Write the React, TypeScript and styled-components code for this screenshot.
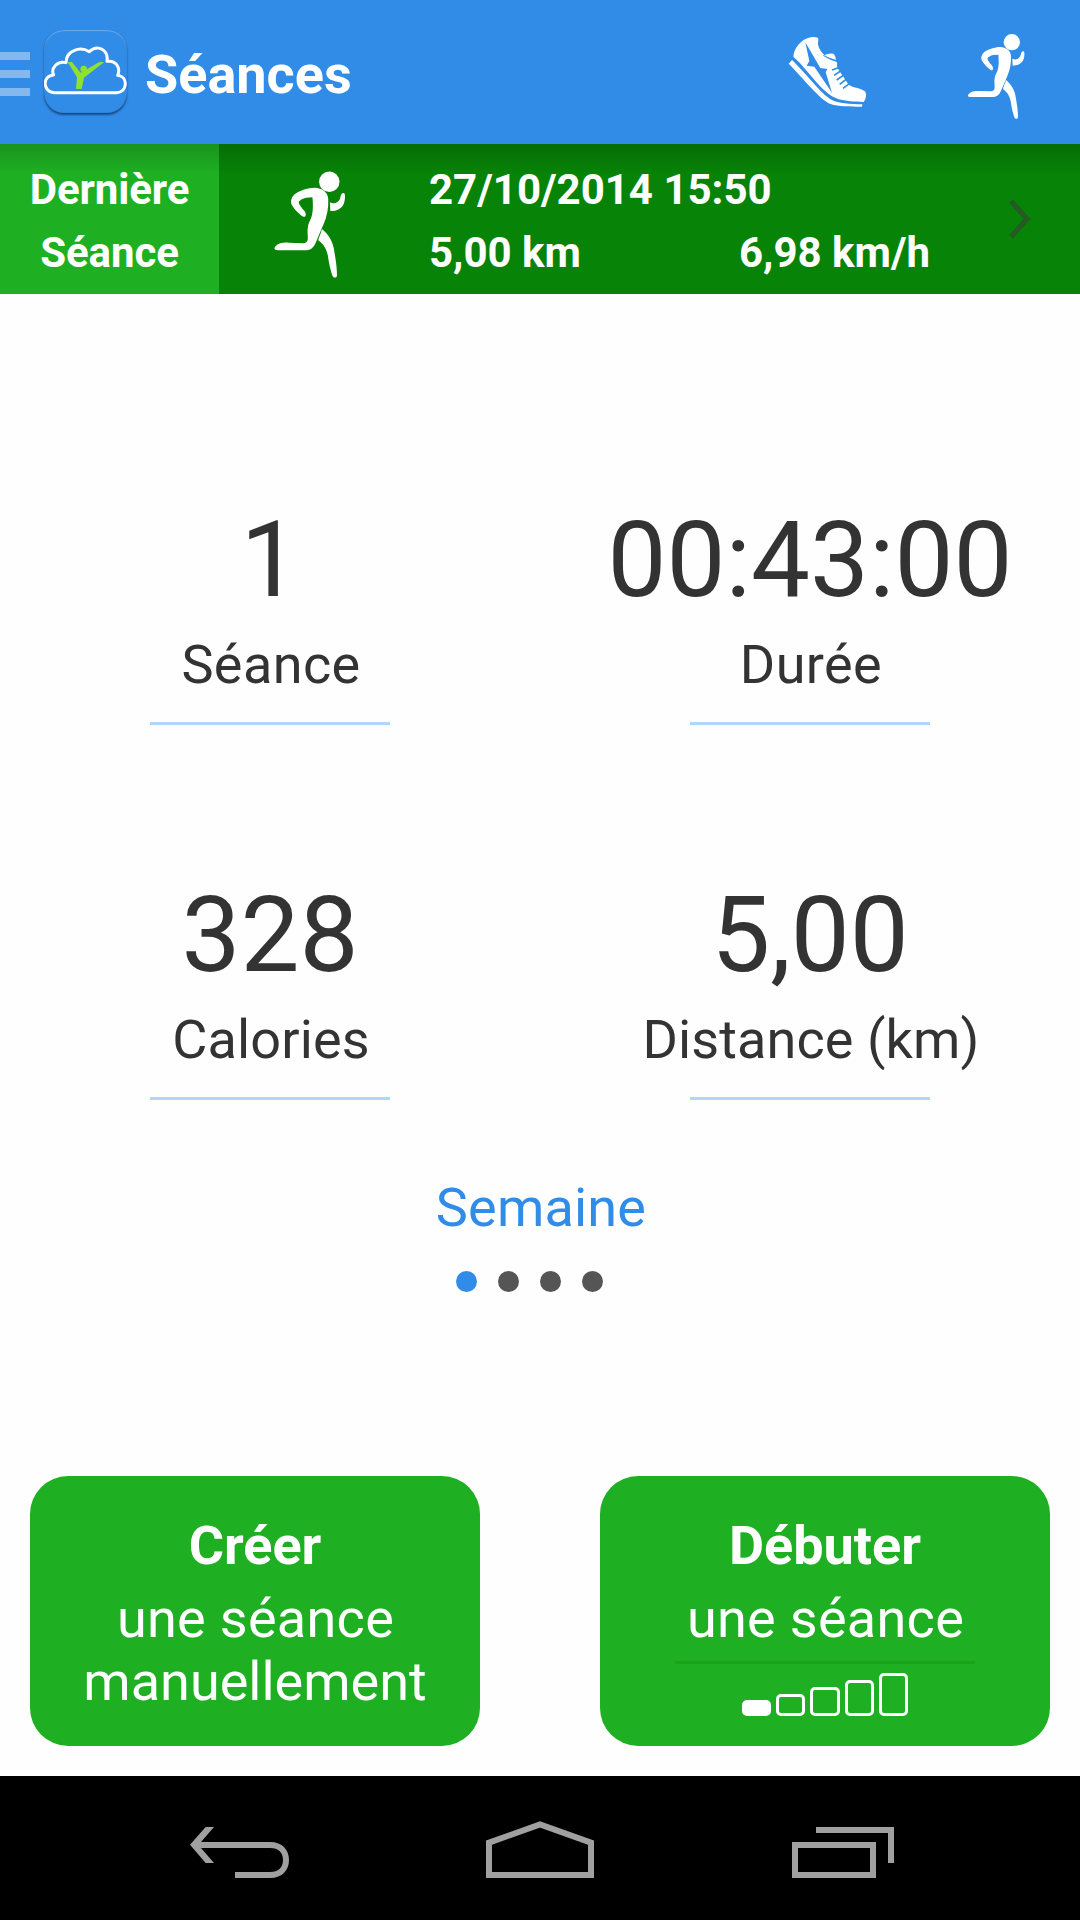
import React from "react";
import styled, { createGlobalStyle } from "styled-components";

const GlobalStyle = createGlobalStyle`
  * { box-sizing: border-box; }
  html, body { margin: 0; padding: 0; background: #fff; }
  body { font-family: Roboto, "Liberation Sans", sans-serif; color: #333; }
`;

const Screen = styled.div`
  width: 1080px;
  height: 1920px;
  display: flex;
  flex-direction: column;
  background: #fefefe;
  overflow: hidden;
  svg { display: block; }
`;

const ActionBar = styled.header`
  height: 144px;
  flex: none;
  display: flex;
  align-items: center;
  padding-right: 30px;
  background: #318ce7;
`;

const MenuHandle = styled.div`
  width: 30px;
  margin: 4px 13.5px 0 0;
  display: flex;
  flex-direction: column;
  gap: 10px;
`;

const MenuLine = styled.span`
  height: 8px;
  background: #84b9f0;
`;

const LogoTile = styled.div`
  width: 83px;
  height: 84px;
  border-radius: 20px;
  box-shadow: inset 0 1px 1px rgba(255, 255, 255, 0.3), inset 0 -1px 1px rgba(0, 20, 50, 0.6),
    0 1px 2px rgba(0, 20, 50, 0.5);
`;

const Title = styled.h1`
  flex: 1;
  margin: 0 0 0 18.5px;
  padding-top: 5px;
  font-size: 54px;
  line-height: 63px;
  font-weight: 700;
  color: #fff;
`;

const Actions = styled.div`
  display: flex;
  gap: 60px;
  padding-top: 6px;
`;

const LastSession = styled.section`
  height: 150px;
  flex: none;
  display: flex;
  background: linear-gradient(rgba(0, 0, 0, 0.17), rgba(0, 0, 0, 0) 30px), #078307;
  color: #fff;
  font-size: 42px;
  line-height: 63px;
  font-weight: 700;
`;

const LastLabel = styled.div`
  width: 219px;
  padding-top: 14px;
  text-align: center;
  letter-spacing: -0.1px;
  background: linear-gradient(rgba(0, 0, 0, 0.17), rgba(0, 0, 0, 0) 30px), #1eb022;
`;

const LastIcon = styled.div`
  width: 210px;
  padding: 10px 0 0 33px;
`;

const LastData = styled.div`
  width: 570px;
  padding-top: 14px;
`;

const DataRow = styled.div`
  display: grid;
  grid-template-columns: 310px 1fr;
`;

const Chevron = styled.div`
  padding: 54px 0 0 8px;
`;

const Stats = styled.main`
  flex: none;
  padding-top: 205px;
  display: grid;
  grid-template-columns: 540px 540px;
  row-gap: 149px;
`;

const Stat = styled.div`
  display: flex;
  flex-direction: column;
  align-items: center;
`;

const StatValue = styled.div`
  font-size: 105px;
  line-height: 124px;
`;

const StatLabel = styled.div<{ $tracking: number }>`
  margin-top: 10px;
  padding-left: 2px;
  font-size: 54px;
  line-height: 63px;
  letter-spacing: ${(p) => p.$tracking}px;
`;

const Rule = styled.div<{ $width: number; $color: string; $top: number }>`
  width: ${(p) => p.$width}px;
  height: 3px;
  margin-top: ${(p) => p.$top}px;
  background: ${(p) => p.$color};
`;

const Period = styled.div`
  margin-top: 76px;
  padding-left: 2px;
  text-align: center;
  font-size: 54px;
  line-height: 63px;
  letter-spacing: 0.2px;
  color: #318ce7;
`;

const Dots = styled.div`
  margin-top: 32px;
  display: flex;
  justify-content: center;
`;

const Dot = styled.span<{ $active?: boolean }>`
  width: 21px;
  height: 21px;
  margin-right: 21px;
  border-radius: 50%;
  background: ${(p) => (p.$active ? "#318ce7" : "#555")};
`;

const Buttons = styled.div`
  margin-top: auto;
  padding: 0 30px 30px;
  display: flex;
  justify-content: space-between;
`;

const BigButton = styled.button`
  width: 450px;
  height: 270px;
  padding: 38px 0 0;
  border: 0;
  border-radius: 38px;
  background: #1eb022;
  color: #fff;
  font: 400 54px/63px Roboto, "Liberation Sans", sans-serif;
  display: flex;
  flex-direction: column;
  align-items: center;
`;

const Strong = styled.strong`
  font-weight: 700;
  margin-bottom: 10px;
`;

const Phrase = styled.span`
  padding-left: 1px;
  letter-spacing: 0.3px;
`;

const Levels = styled.div`
  height: 43px;
  margin-top: 9px;
  display: flex;
  align-items: flex-end;
  gap: 5px;
`;

const Level = styled.span<{ $height: number; $filled?: boolean }>`
  width: 29.2px;
  height: ${(p) => p.$height}px;
  border: 3px solid #fff;
  border-radius: 5px;
  background: ${(p) => (p.$filled ? "#fff" : "transparent")};
`;

const NavBar = styled.nav`
  height: 144px;
  flex: none;
  display: grid;
  grid-template-columns: 300px 290px 160px;
  padding: 24px 0 0 170px;
  background: #000;
`;

const Runner = ({ width, height }: { width: number; height: number }) => (
  <svg width={width} height={height} viewBox="0 0 300 330" fill="#fff">
    <circle cx="185.500" cy="66.500" r="24.500" />
    <path d="M150 81C168 82 182 91 183 108C184 130 180 150 172 168C166 182 160 196 155 208C149 222 144 230 130 231L62 231C53 231 52 226 57 221C65 213 75 212 88 213L122 214C130 214 134 210 134 202C134 188 131 175 139 160C147 146 147 125 145 104L130 105C122 107 114 111 112 115C113 122 122 132 127 138C131 147 129 153 122 150C112 143 100 131 95 121C92 112 95 103 103 96C115 88 135 81 150 81Z" />
    <path d="M187 116C197 121 207 117 211 108C213 103 212 99 216 95C222 91 224 96 223 106C222 124 212 137 188 137Z" />
    <path d="M168 180C180 190 192 205 196 225C200 248 204 270 204 292C203 298 196 298 193 292C189 280 185 265 183 250C181 232 174 218 159 207C160 200 165 192 168 180Z" />
  </svg>
);

const Shoe = () => (
  <svg width="120" height="110" viewBox="0 0 360 330">
    <path
      fill="#fff"
      d="M70 110C72 88 88 64 112 55C124 50 136 50 143 53C148 57 142 66 145 77C150 96 166 108 182 119C190 122 196 124 200 126C203 130 200 137 202 143L236 194C250 203 275 205 285 214C291 223 288 237 281 246C255 246 225 243 206 238C182 230 162 212 142 190C120 165 97 134 70 110Z"
    />
    <path fill="#fff" d="M164 106C170 101 180 99 190 101C195 104 197 112 198 121C188 117 176 114 164 106Z" />
    <path fill="none" stroke="#318ce7" strokeWidth="3" d="M160 106C174 117 187 118 200 122" />
    <path
      fill="none"
      stroke="#318ce7"
      strokeWidth="5"
      d="M186 150L205 143M192 166L212 153M200 180L220 166M209 193L228 178M219 205L238 191"
    />
    <path fill="#318ce7" d="M106 67L151 144L172 147L167 157L186 218L133 140L110 137L118 123Z" />
    <path
      fill="#fff"
      d="M66 120C82 136 105 160 128 187C150 212 168 231 186 240C205 250 240 252 277 253L276 260C240 260 205 260 182 252C150 240 105 180 56 131Z"
    />
  </svg>
);

const CloudLogo = () => (
  <svg width="83" height="84" viewBox="132 90 249 252">
    <path
      fill="none"
      stroke="#fff"
      strokeWidth="9"
      strokeLinejoin="round"
      d="M164 278C126 276 127 226 161 225C151 205 172 181 198 188C198 154 238 137 268 155C294 131 326 150 321 184C347 180 363 203 353 226C385 230 383 276 350 278Z"
    />
    <circle cx="251" cy="207" r="10" fill="#8fe02f" />
    <path fill="#8fe02f" d="M203 186L216 186L242 218L298 186L313 186L252 233L245 267L228 267L231 232Z" />
  </svg>
);

const stats = [
  { value: "1", label: "Séance", tracking: 0.4 },
  { value: "00:43:00", label: "Durée", tracking: 0.4 },
  { value: "328", label: "Calories", tracking: 0.15 },
  { value: "5,00", label: "Distance (km)", tracking: 0.1 },
];

const levels = [16, 22, 29, 36, 43];

export default function App() {
  return (
    <Screen>
      <GlobalStyle />
      <ActionBar>
        <MenuHandle>
          <MenuLine />
          <MenuLine />
          <MenuLine />
        </MenuHandle>
        <LogoTile>
          <CloudLogo />
        </LogoTile>
        <Title>Séances</Title>
        <Actions>
          <Shoe />
          <Runner width={100} height={110} />
        </Actions>
      </ActionBar>
      <LastSession>
        <LastLabel>
          Dernière
          <br />
          Séance
        </LastLabel>
        <LastIcon>
          <Runner width={125} height={137.5} />
        </LastIcon>
        <LastData>
          <div>27/10/2014 15:50</div>
          <DataRow>
            <span>5,00 km</span>
            <span>6,98 km/h</span>
          </DataRow>
        </LastData>
        <Chevron>
          <svg width="28" height="42" viewBox="0 0 28 42" fill="none" stroke="#245a24" strokeWidth="5">
            <path d="M4 3L20 21L4 39" />
          </svg>
        </Chevron>
      </LastSession>
      <Stats>
        {stats.map((s) => (
          <Stat key={s.label}>
            <StatValue>{s.value}</StatValue>
            <StatLabel $tracking={s.tracking}>{s.label}</StatLabel>
            <Rule $width={240} $color="#b3d5f6" $top={26} />
          </Stat>
        ))}
      </Stats>
      <Period>Semaine</Period>
      <Dots>
        <Dot $active />
        <Dot />
        <Dot />
        <Dot />
      </Dots>
      <Buttons>
        <BigButton>
          <Strong>Créer</Strong>
          <Phrase>une séance</Phrase>
          <span>manuellement</span>
        </BigButton>
        <BigButton>
          <Strong>Débuter</Strong>
          <Phrase>une séance</Phrase>
          <Rule $width={300} $color="#1ba31b" $top={11} />
          <Levels>
            {levels.map((h, i) => (
              <Level key={h} $height={h} $filled={i === 0} />
            ))}
          </Levels>
        </BigButton>
      </Buttons>
      <NavBar>
        <svg width="140" height="100" viewBox="0 0 420 300">
          <path
            fill="#a0a0a0"
            d="M60 134L107 81H132L93 126H300C338 126 357 150 357 180C357 210 338 234 300 234H195V216H300C326 216 339 202 339 180C339 158 326 144 300 144H93L132 189H107Z"
          />
        </svg>
        <svg width="140" height="100" viewBox="0 0 420 300">
          <path fill="none" stroke="#a0a0a0" strokeWidth="18" d="M57 225V128L210 73L363 128V225Z" />
        </svg>
        <svg width="160" height="100" viewBox="0 0 480 300" fill="none" stroke="#a0a0a0" strokeWidth="18">
          <path d="M105 135H339V225H105ZM168 90H393V189" />
        </svg>
      </NavBar>
    </Screen>
  );
}
